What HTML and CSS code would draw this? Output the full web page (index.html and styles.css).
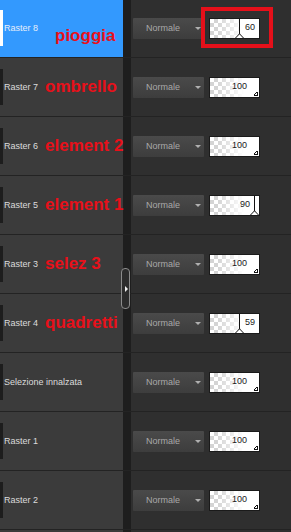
FILE: index.html
```
<!DOCTYPE html>
<html lang="it">
<head>
    <meta charset="UTF-8">
    <meta name="viewport" content="width=device-width, initial-scale=1.0">
    <title>Livelli</title>
    <link rel="stylesheet" href="styles.css">
</head>
<body>
    <div class="panel">
        <!-- Livelli -->
        <div class="row">
            <div class="layer active">
                <span class="thumb"></span>
                <span class="name">Raster 8</span>
                <span class="note shift">pioggia</span>
            </div>
            <div class="strip"></div>
            <div class="props">
                <div class="blend">Normale<span class="caret"></span></div>
                <div class="op">
                    <span class="op-mark" style="left:60%"><svg class="tri" width="9" height="5" viewBox="0 0 9 5"><path d="M0.5 5 L4.5 0.8 L8.5 5" fill="#fff" stroke="#111" stroke-width="1"/></svg></span>
                    <span class="op-num after">60</span>
                </div>
                <span class="highlight"></span>
            </div>
        </div>

        <div class="row">
            <div class="layer">
                <span class="thumb"></span>
                <span class="name">Raster 7</span>
                <span class="note">ombrello</span>
            </div>
            <div class="strip"></div>
            <div class="props">
                <div class="blend">Normale<span class="caret"></span></div>
                <div class="op full"><span class="op-num">100</span></div>
            </div>
        </div>

        <div class="row">
            <div class="layer">
                <span class="thumb"></span>
                <span class="name">Raster 6</span>
                <span class="note">element 2</span>
            </div>
            <div class="strip"></div>
            <div class="props">
                <div class="blend">Normale<span class="caret"></span></div>
                <div class="op full"><span class="op-num">100</span></div>
            </div>
        </div>

        <div class="row">
            <div class="layer">
                <span class="thumb"></span>
                <span class="name">Raster 5</span>
                <span class="note">element 1</span>
            </div>
            <div class="strip"></div>
            <div class="props">
                <div class="blend">Normale<span class="caret"></span></div>
                <div class="op">
                    <span class="op-mark" style="left:90%"><svg class="tri" width="9" height="5" viewBox="0 0 9 5"><path d="M0.5 5 L4.5 0.8 L8.5 5" fill="#fff" stroke="#111" stroke-width="1"/></svg></span>
                    <span class="op-num before">90</span>
                </div>
            </div>
        </div>

        <div class="row">
            <div class="layer">
                <span class="thumb"></span>
                <span class="name">Raster 3</span>
                <span class="note">selez 3</span>
            </div>
            <div class="strip"></div>
            <div class="props">
                <div class="blend">Normale<span class="caret"></span></div>
                <div class="op full"><span class="op-num">100</span></div>
            </div>
        </div>

        <div class="row">
            <div class="layer">
                <span class="thumb"></span>
                <span class="name">Raster 4</span>
                <span class="note">quadretti</span>
            </div>
            <div class="strip"></div>
            <div class="props">
                <div class="blend">Normale<span class="caret"></span></div>
                <div class="op">
                    <span class="op-mark" style="left:59%"><svg class="tri" width="9" height="5" viewBox="0 0 9 5"><path d="M0.5 5 L4.5 0.8 L8.5 5" fill="#fff" stroke="#111" stroke-width="1"/></svg></span>
                    <span class="op-num after">59</span>
                </div>
            </div>
        </div>

        <div class="row">
            <div class="layer">
                <span class="thumb"></span>
                <span class="name">Selezione innalzata</span>
            </div>
            <div class="strip"></div>
            <div class="props">
                <div class="blend">Normale<span class="caret"></span></div>
                <div class="op full"><span class="op-num">100</span></div>
            </div>
        </div>

        <div class="row">
            <div class="layer">
                <span class="thumb"></span>
                <span class="name">Raster 1</span>
            </div>
            <div class="strip"></div>
            <div class="props">
                <div class="blend">Normale<span class="caret"></span></div>
                <div class="op full"><span class="op-num">100</span></div>
            </div>
        </div>

        <div class="row">
            <div class="layer">
                <span class="thumb"></span>
                <span class="name">Raster 2</span>
            </div>
            <div class="strip"></div>
            <div class="props">
                <div class="blend">Normale<span class="caret"></span></div>
                <div class="op full"><span class="op-num">100</span></div>
            </div>
        </div>

        <div class="row last">
            <div class="layer"></div>
            <div class="strip"></div>
            <div class="props"></div>
        </div>

        <!-- Maniglia del divisore -->
        <div class="handle"><span class="handle-arrow"></span></div>
    </div>
</body>
</html>
```

FILE: styles.css
```
/* Stile generale */
html, body {
    height: 532px;
}
body {
    margin: 0;
    background-color: #2f2f2f;
    font-family: "Liberation Sans", Arial, sans-serif;
    overflow: hidden;
}
.panel {
    position: relative;
    margin-top: -1px;
    width: 291px;
    height: 533px;
    overflow: hidden;
}

/* Riga di livello */
.row {
    display: flex;
    height: 58px;
    border-bottom: 1px solid #232323;
}
.row.last {
    height: 10px;
    border-bottom: none;
}
.layer {
    width: 123px;
    flex: none;
    display: flex;
    align-items: center;
    background-color: #3b3b3b;
}
.layer.active {
    background-color: #3399fe;
}
.thumb {
    width: 3px;
    height: 36px;
    flex: none;
    background-color: #1d1d1d;
}
.layer.active .thumb {
    background-color: #fff;
}
.name {
    width: 41px;
    flex: none;
    padding-left: 1px;
    font-size: 9px;
    color: #dcdcdc;
    white-space: nowrap;
}
.layer.active .name {
    color: #e6eefa;
}
.note {
    position: relative;
    z-index: 1;
    font-weight: bold;
    font-size: 17px;
    color: #e8101a;
    white-space: nowrap;
}
.note.shift {
    margin-left: 10px;
    margin-top: 16px;
}
.strip {
    width: 8px;
    flex: none;
    background-color: #1e1e1e;
}

/* Proprietà: fusione e opacità */
.props {
    position: relative;
    flex: 1;
    display: flex;
    align-items: center;
    gap: 5px;
    padding-left: 2px;
    background-color: #2f2f2f;
}
.blend {
    position: relative;
    box-sizing: border-box;
    width: 71px;
    height: 21px;
    padding-left: 13px;
    line-height: 21px;
    font-size: 9px;
    color: #a9a9a9;
    background: linear-gradient(#4a4a4a, #3d3d3d);
    border-radius: 1px;
}
.caret {
    position: absolute;
    right: 3px;
    top: 9px;
    border-left: 3px solid transparent;
    border-right: 3px solid transparent;
    border-top: 3px solid #b0b0b0;
}
.op {
    position: relative;
    box-sizing: border-box;
    width: 51px;
    height: 21px;
    border: 1px solid #1a1a1a;
    background:
        linear-gradient(to right, rgba(255,255,255,0) 15%, #fff 70%),
        conic-gradient(#d4d4d4 25%, #fff 0 50%, #d4d4d4 0 75%, #fff 0) 0 0 / 8px 8px;
}
.op-mark {
    position: absolute;
    top: 0;
    bottom: 0;
    right: 0;
    background-color: #fff;
    border-left: 1px solid #111;
}
.tri {
    position: absolute;
    left: -5px;
    bottom: 0;
    display: block;
}
.op.full::after {
    content: "";
    position: absolute;
    right: 1px;
    bottom: 1px;
    width: 4px;
    height: 4px;
    background: linear-gradient(to top left, transparent 42%, #111 45%, #111 60%, transparent 64%);
    border-bottom: 1px solid #111;
    border-right: 1px solid #111;
    box-sizing: border-box;
}
.op-num {
    position: absolute;
    top: 3px;
    right: 12px;
    font-size: 9px;
    line-height: 10px;
    color: #1a1a1a;
}
.op-num.after {
    right: 4px;
}
.op-num.before {
    right: 9px;
}
.highlight {
    position: absolute;
    left: 70px;
    top: 8px;
    width: 72px;
    height: 41px;
    box-sizing: border-box;
    border: 4px solid #e5101a;
}

/* Maniglia */
.handle {
    position: absolute;
    left: 121px;
    top: 269px;
    box-sizing: border-box;
    width: 9px;
    height: 41px;
    border: 1px solid #8c8c8c;
    border-radius: 4px;
    background-color: #2c2c2c;
    z-index: 2;
}
.handle-arrow {
    position: absolute;
    left: 3px;
    top: 17px;
    border-top: 3px solid transparent;
    border-bottom: 3px solid transparent;
    border-left: 3px solid #f0f0f0;
}
```
